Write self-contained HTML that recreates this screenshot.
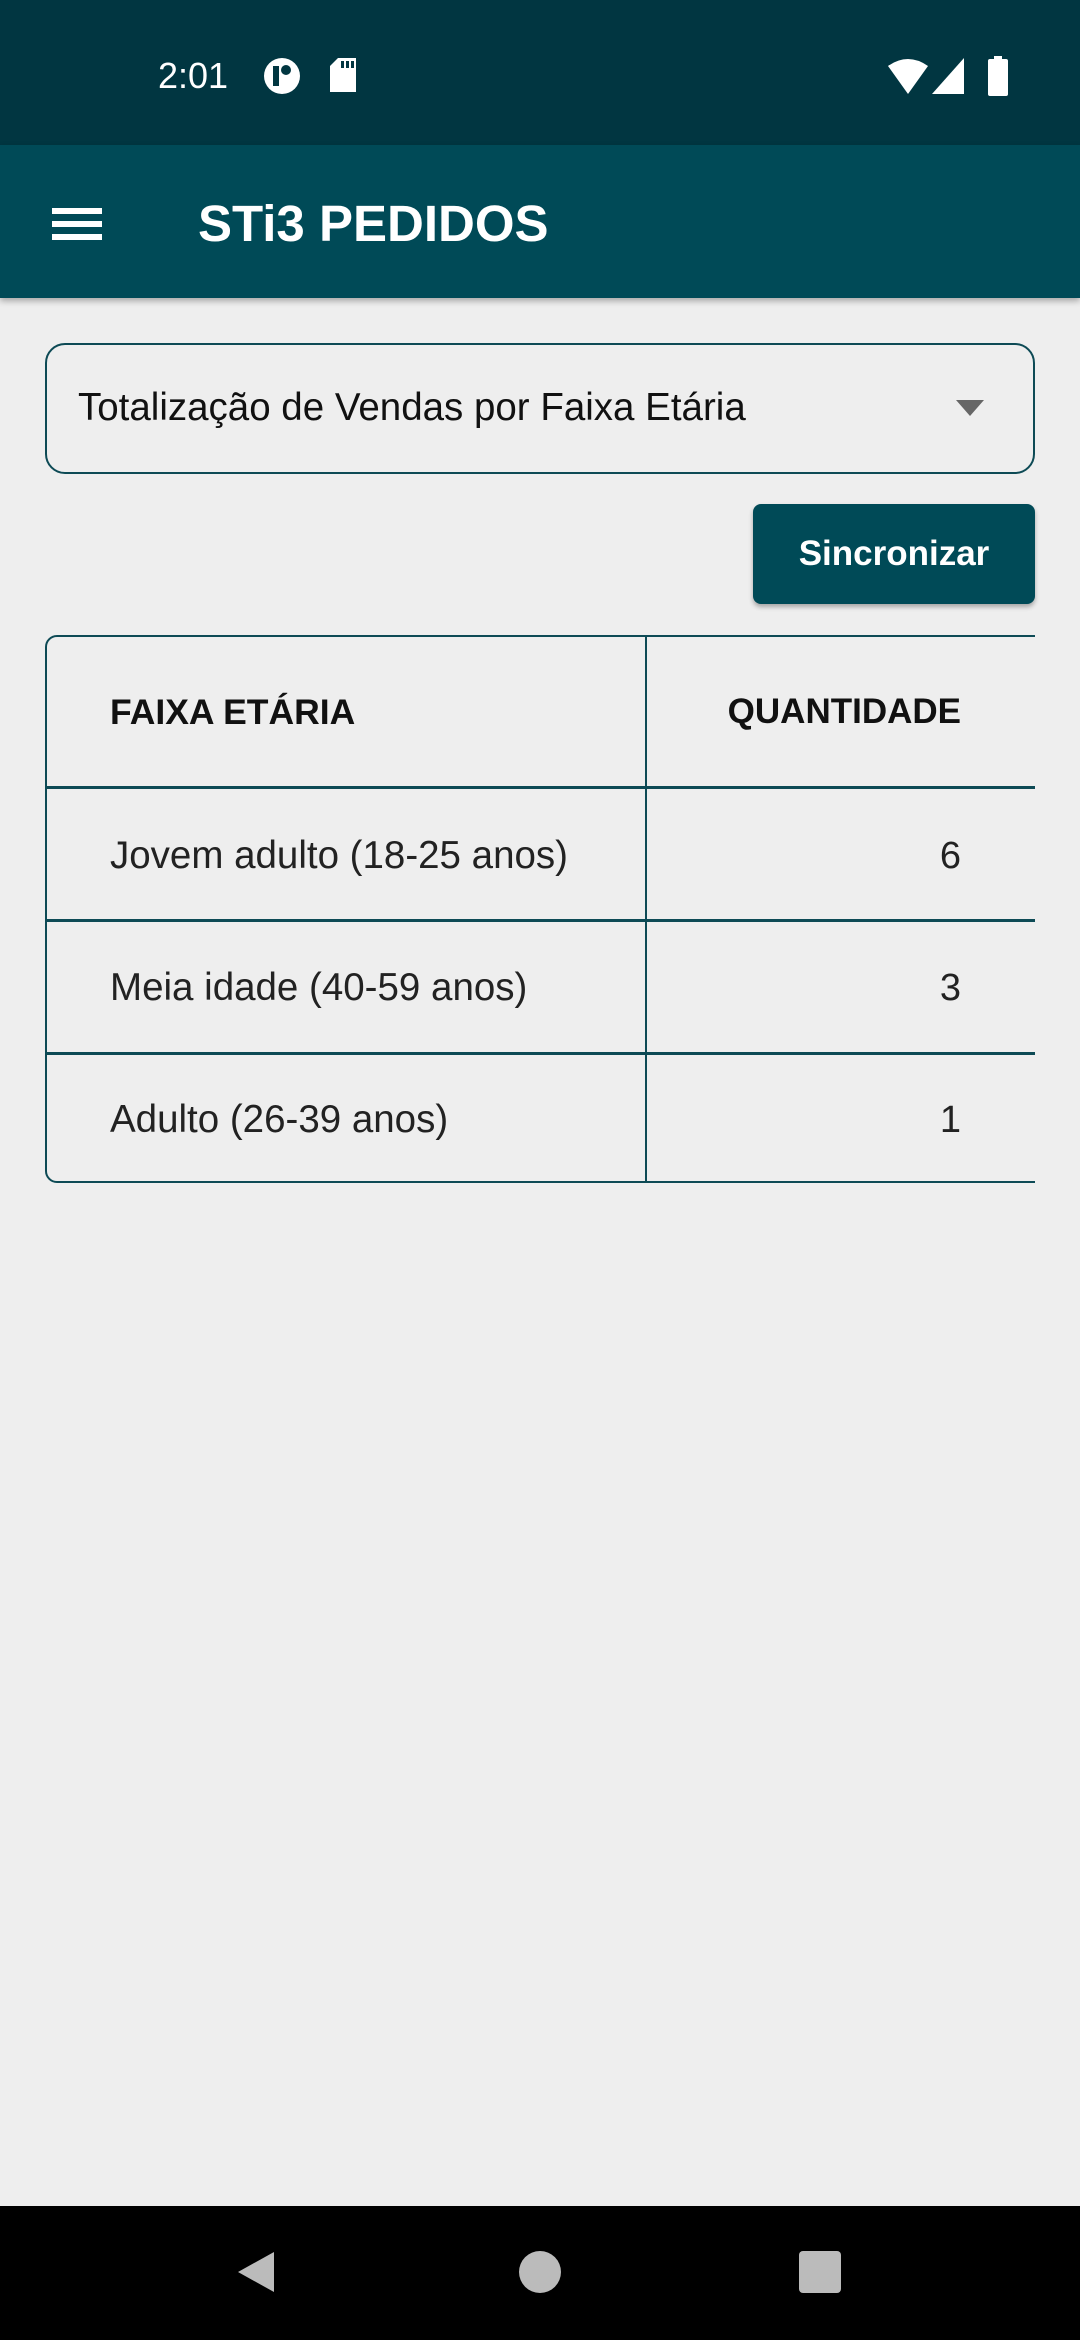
<!DOCTYPE html>
<html><head><meta charset="utf-8"><style>
*{margin:0;padding:0;box-sizing:border-box}
body{width:1080px;height:2340px;background:#eeeeee;font-family:"Liberation Sans",sans-serif;position:relative;overflow:hidden}
.abs{position:absolute}
</style></head><body>
<div class="abs" style="left:0;top:0;width:1080px;height:145px;background:#013641"></div>
<div class="abs" style="left:158px;top:52px;color:#fff;font-size:36px;line-height:48px">2:01</div>
<svg class="abs" style="left:262px;top:56px" width="40" height="40" viewBox="0 0 40 40"><circle cx="20" cy="20" r="18" fill="#fff"/><rect x="11" y="10" width="6" height="20" fill="#013641"/><circle cx="24" cy="14" r="5" fill="#013641"/></svg>
<svg class="abs" style="left:328px;top:58px" width="30" height="36" viewBox="0 0 30 36"><path d="M10 0H28V34H2V8Z" fill="#fff"/><rect x="13" y="3" width="3" height="7" fill="#013641"/><rect x="18" y="3" width="3" height="7" fill="#013641"/><rect x="23" y="3" width="3" height="7" fill="#013641"/></svg>
<svg class="abs" style="left:886px;top:58px" width="44" height="36" viewBox="0 0 44 36"><path d="M2 8Q22-6 42 8L22 36Z" fill="#fff"/></svg>
<svg class="abs" style="left:932px;top:58px" width="34" height="36" viewBox="0 0 34 36"><path d="M32 0V36H0Z" fill="#fff"/></svg>
<svg class="abs" style="left:986px;top:56px" width="24" height="40" viewBox="0 0 24 40"><rect x="8" y="0" width="8" height="4" fill="#fff"/><rect x="2" y="3" width="20" height="37" rx="2" fill="#fff"/></svg>
<div class="abs" style="left:0;top:145px;width:1080px;height:153px;background:#004a57;box-shadow:0 3px 6px rgba(0,0,0,.3)"></div>
<div class="abs" style="left:52px;top:208px;width:50px;height:6px;background:#fff"></div>
<div class="abs" style="left:52px;top:221px;width:50px;height:6px;background:#fff"></div>
<div class="abs" style="left:52px;top:234px;width:50px;height:6px;background:#fff"></div>
<div class="abs" style="left:198px;top:192px;color:#fff;font-size:51px;font-weight:bold;line-height:64px">STi3 PEDIDOS</div>
<div class="abs" style="left:45px;top:343px;width:990px;height:131px;border:2px solid #0d4a55;border-radius:20px"></div>
<div class="abs" style="left:78px;top:386px;font-size:38.5px;line-height:44px;color:#111">Totalização de Vendas por Faixa Etária</div>
<svg class="abs" style="left:956px;top:400px" width="28" height="16"><path d="M0 0H28L14 16Z" fill="#666"/></svg>
<div class="abs" style="left:753px;top:504px;width:282px;height:100px;background:#004a57;border-radius:8px;box-shadow:0 3px 5px rgba(0,0,0,.3);color:#fff;font-size:35px;font-weight:bold;text-align:center;line-height:100px">Sincronizar</div>
<div class="abs" style="left:45px;top:635px;width:1100px;height:548px;border:2px solid #0d4a55;border-radius:12px"></div>
<div class="abs" style="left:645px;top:635px;width:2px;height:548px;background:#0d4a55"></div>
<div class="abs" style="left:45px;top:786px;width:1035px;height:3px;background:#0d4a55"></div>
<div class="abs" style="left:45px;top:919px;width:1035px;height:3px;background:#0d4a55"></div>
<div class="abs" style="left:45px;top:1052px;width:1035px;height:3px;background:#0d4a55"></div>
<div class="abs" style="left:1035px;top:620px;width:45px;height:580px;background:#eeeeee"></div>
<div class="abs" style="left:110px;top:690px;font-size:35.5px;font-weight:bold;color:#111;line-height:44px">FAIXA ETÁRIA</div>
<div class="abs" style="left:600px;width:361px;text-align:right;top:690px;font-size:35px;font-weight:bold;color:#111;line-height:44px">QUANTIDADE</div>
<div class="abs" style="left:110px;top:834px;font-size:38.5px;color:#222;line-height:44px">Jovem adulto (18-25 anos)</div>
<div class="abs" style="left:600px;width:361px;text-align:right;top:834px;font-size:38px;color:#222;line-height:44px">6</div>
<div class="abs" style="left:110px;top:966px;font-size:38.5px;color:#222;line-height:44px">Meia idade (40-59 anos)</div>
<div class="abs" style="left:600px;width:361px;text-align:right;top:966px;font-size:38px;color:#222;line-height:44px">3</div>
<div class="abs" style="left:110px;top:1098px;font-size:38.5px;color:#222;line-height:44px">Adulto (26-39 anos)</div>
<div class="abs" style="left:600px;width:361px;text-align:right;top:1098px;font-size:38px;color:#222;line-height:44px">1</div>
<div class="abs" style="left:0;top:2206px;width:1080px;height:134px;background:#000"></div>
<svg class="abs" style="left:234px;top:2250px" width="44" height="44"><path d="M40 2V42L4 22Z" fill="#bbb"/></svg>
<div class="abs" style="left:519px;top:2251px;width:42px;height:42px;border-radius:50%;background:#bbb"></div>
<div class="abs" style="left:799px;top:2251px;width:42px;height:42px;border-radius:4px;background:#bbb"></div>
</body></html>
